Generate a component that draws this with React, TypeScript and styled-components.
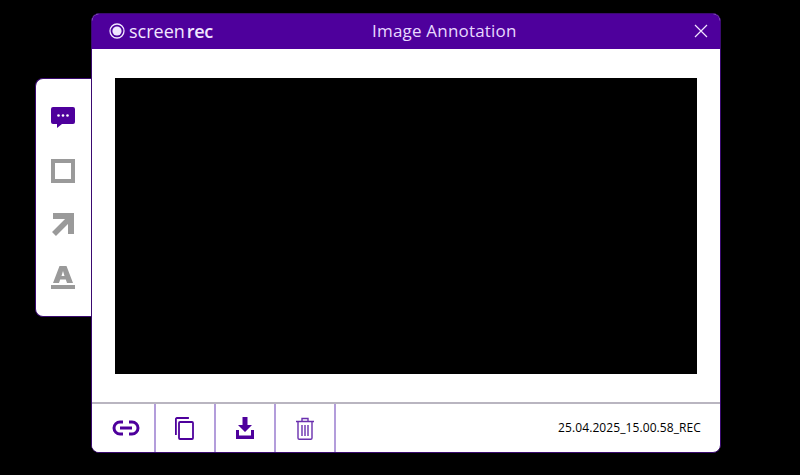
import styled, { createGlobalStyle } from 'styled-components';

const purple = '#4e009c';
const grey = '#9a9a9a';

const Global = createGlobalStyle`
  html, body {
    margin: 0;
    height: 100%;
    background: #000;
    font-family: "Open Sans", "Noto Sans", sans-serif;
  }
`;

const Page = styled.div`
  display: flex;
  align-items: flex-start;
  width: 800px;
  height: 475px;
  padding: 13px 0 0 35px;
  box-sizing: border-box;
  overflow: hidden;
`;

const Tools = styled.div`
  display: flex;
  flex-direction: column;
  align-items: center;
  gap: 29px;
  width: 56px;
  height: 239px;
  margin-top: 65px;
  padding: 27px 1px 0 0;
  box-sizing: border-box;
  background: #fff;
  border: 1px solid #3a0a70;
  border-right: none;
  border-radius: 8px 0 0 8px;
`;

const ToolIcon = styled.svg`
  display: block;
  width: 24px;
  height: 24px;
  flex-shrink: 0;
`;

const Window = styled.div`
  display: flex;
  flex-direction: column;
  width: 630px;
  height: 440px;
  box-sizing: border-box;
  background: #fff;
  border: 1px solid #3a0a70;
  border-radius: 8px;
  overflow: hidden;
`;

const Header = styled.div`
  display: grid;
  grid-template-columns: 263px auto 1fr;
  align-items: center;
  height: 36px;
  margin: -1px -1px 0;
  padding: 0 13px 0 18px;
  background: ${purple};
  color: #f1e6ff;
  flex-shrink: 0;
`;

const Logo = styled.div`
  display: flex;
  align-items: center;
  gap: 4px;
  font-size: 18px;
  line-height: 20px;
  color: #f1e6ff;
`;

const LogoBold = styled.span`
  margin-left: 2px;
  font-weight: 600;
  letter-spacing: -0.3px;
`;

const Title = styled.div`
  font-size: 17px;
  line-height: 22px;
  letter-spacing: 0.2px;
  color: #e8d8ff;
`;

const CloseButton = styled.button`
  justify-self: end;
  display: flex;
  width: 14px;
  height: 14px;
  padding: 0;
  border: none;
  background: none;
`;

const Content = styled.div`
  flex: 1;
  padding: 29px 23px 28px;
  border-bottom: 2px solid #b9b5c0;
`;

const Shot = styled.div`
  height: 296px;
  background: #000;
`;

const Footer = styled.div`
  display: flex;
  align-items: stretch;
  height: 48px;
  flex-shrink: 0;
`;

const FooterButton = styled.button<{ $first?: boolean }>`
  display: flex;
  align-items: center;
  justify-content: center;
  width: ${(p) => (p.$first ? 64 : 60)}px;
  padding: ${(p) => (p.$first ? '0 0 0 6px' : '0 1px 0 0')};
  background: #fff;
  border: none;
  border-right: 2px solid #b39ddb;
  box-sizing: border-box;
`;

const FileName = styled.div`
  flex: 1;
  align-self: center;
  padding-right: 19px;
  text-align: right;
  font-size: 12px;
  line-height: 16px;
  letter-spacing: 0.09px;
  color: #000;
`;

export default function App() {
  return (
    <Page>
      <Global />
      <Tools>
        <ToolIcon viewBox="0 -1 24 24">
          <path
            d="M2 0h20a2 2 0 0 1 2 2v13a2 2 0 0 1-2 2H11l-5 4v-4H2a2 2 0 0 1-2-2V2a2 2 0 0 1 2-2z"
            fill={purple}
          />
          <circle cx="7.5" cy="8.5" r="1.3" fill="#fff" />
          <circle cx="12" cy="8.5" r="1.3" fill="#fff" />
          <circle cx="16.5" cy="8.5" r="1.3" fill="#fff" />
        </ToolIcon>
        <ToolIcon viewBox="0 0 24 24">
          <rect x="2" y="2" width="20" height="20" fill="none" stroke={grey} strokeWidth="4" />
        </ToolIcon>
        <ToolIcon viewBox="0 0 24 24">
          <path d="M3 22 19 6" stroke={grey} strokeWidth="5.5" fill="none" />
          <path d="M2 1h21v21h-6V7H2z" fill={grey} />
        </ToolIcon>
        <ToolIcon viewBox="0 -1 24 24">
          <path
            d="M8.500 0h7l6.500 17h-6l-1.200-3.400H9.200L8 17H2zM10.500 10h3L12 5z"
            fill={grey}
            fillRule="evenodd"
          />
          <rect x="0" y="19" width="24" height="4" fill={grey} />
        </ToolIcon>
      </Tools>
      <Window>
        <Header>
          <Logo>
            <svg width="16" height="16" viewBox="0 0 16 16">
              <circle cx="8" cy="8" r="7" fill="none" stroke="#f1e6ff" strokeWidth="1.300" />
              <circle cx="8" cy="8" r="4.600" fill="#f1e6ff" />
            </svg>
            <span>
              screen<LogoBold>rec</LogoBold>
            </span>
          </Logo>
          <Title>Image Annotation</Title>
          <CloseButton aria-label="Close">
            <svg width="14" height="14" viewBox="0 0 14 14">
              <path d="M1 1l12 12M13 1 1 13" stroke="#f1e6ff" strokeWidth="1.200" />
            </svg>
          </CloseButton>
        </Header>
        <Content>
          <Shot />
        </Content>
        <Footer>
          <FooterButton $first aria-label="Copy link">
            <svg width="28" height="16" viewBox="0 0 28 16" fill="none" stroke={purple} strokeWidth="3">
              <path d="M11 2H8a6 6 0 0 0 0 12h3M17 2h3a6 6 0 0 1 0 12h-3" />
              <path d="M8 8h12" />
            </svg>
          </FooterButton>
          <FooterButton aria-label="Copy">
            <svg width="20" height="23" viewBox="1 0 20 23" fill="none" stroke={purple} strokeWidth="1.800">
              <path d="M1.900 18V2a1 1 0 0 1 1-1h12" />
              <rect x="5" y="5" width="14" height="17" rx="1" />
            </svg>
          </FooterButton>
          <FooterButton aria-label="Download">
            <svg width="18" height="22" viewBox="0 0 18 22" fill={purple}>
              <path d="M6.500 0h5v8H16l-7 7-7-7h4.500z" />
              <path d="M0 13h3v5.500h12V13h3v9H0z" />
            </svg>
          </FooterButton>
          <FooterButton aria-label="Delete">
            <svg width="20" height="23" viewBox="0 0 20 23" fill="none" stroke="#6a2fae" strokeWidth="1.400">
              <path d="M1 4.500h18M7 4.500V1.500h6v3" />
              <path d="M3 4.500v16.500a1.300 1.300 0 0 0 1.300 1.300h11.400a1.300 1.300 0 0 0 1.300-1.300V4.500" />
              <path d="M7 8v11M10 8v11M13 8v11" />
            </svg>
          </FooterButton>
          <FileName>25.04.2025_15.00.58_REC</FileName>
        </Footer>
      </Window>
    </Page>
  );
}
